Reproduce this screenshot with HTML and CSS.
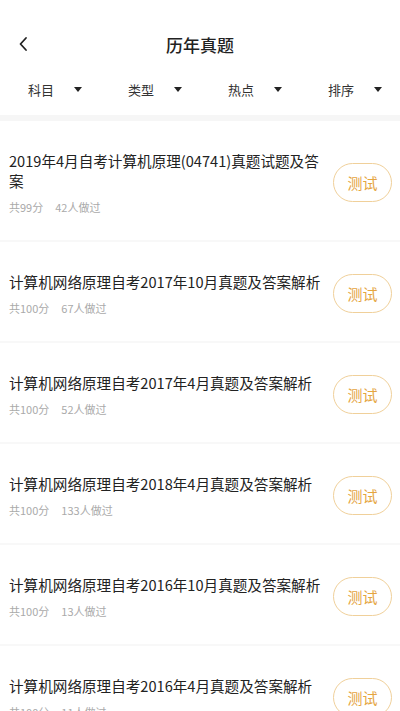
FILE: index.html
```html
<!DOCTYPE html>
<html lang="zh-CN">
<head>
    <meta charset="UTF-8">
    <meta name="viewport" content="width=device-width, initial-scale=1.0">
    <title>历年真题</title>
    <link rel="stylesheet" href="styles.css">
</head>
<body>
    <header class="topbar">
        <span class="back">
            <svg width="10" height="16" viewBox="0 0 10 16"><path d="M8 2 L2.5 8 L8 14" fill="none" stroke="#222" stroke-width="1.8" stroke-linecap="round" stroke-linejoin="round"/></svg>
        </span>
        <h1>历年真题</h1>
    </header>

    <nav class="filters">
        <div class="filter"><span>科目</span><i class="caret"></i></div>
        <div class="filter"><span>类型</span><i class="caret"></i></div>
        <div class="filter"><span>热点</span><i class="caret"></i></div>
        <div class="filter"><span>排序</span><i class="caret"></i></div>
    </nav>

    <ul class="list">
        <li class="item">
            <div class="info">
                <h2>2019年4月自考计算机原理(04741)真题试题及答案</h2>
                <p class="meta"><span>共99分</span><span>42人做过</span></p>
            </div>
            <button class="test">测试</button>
        </li>
        <li class="item">
            <div class="info">
                <h2>计算机网络原理自考2017年10月真题及答案解析</h2>
                <p class="meta"><span>共100分</span><span>67人做过</span></p>
            </div>
            <button class="test">测试</button>
        </li>
        <li class="item">
            <div class="info">
                <h2>计算机网络原理自考2017年4月真题及答案解析</h2>
                <p class="meta"><span>共100分</span><span>52人做过</span></p>
            </div>
            <button class="test">测试</button>
        </li>
        <li class="item">
            <div class="info">
                <h2>计算机网络原理自考2018年4月真题及答案解析</h2>
                <p class="meta"><span>共100分</span><span>133人做过</span></p>
            </div>
            <button class="test">测试</button>
        </li>
        <li class="item">
            <div class="info">
                <h2>计算机网络原理自考2016年10月真题及答案解析</h2>
                <p class="meta"><span>共100分</span><span>13人做过</span></p>
            </div>
            <button class="test">测试</button>
        </li>
        <li class="item">
            <div class="info">
                <h2>计算机网络原理自考2016年4月真题及答案解析</h2>
                <p class="meta"><span>共100分</span><span>11人做过</span></p>
            </div>
            <button class="test">测试</button>
        </li>
    </ul>
</body>
</html>
```

FILE: styles.css
```css
body {
    margin: 0;
    background: #fff;
    color: #333;
    font-family: "Noto Sans CJK SC", sans-serif;
    overflow: hidden;
}
.topbar {
    height: 66px;
    margin-top: 11px;
    display: flex;
    align-items: center;
    justify-content: center;
    position: relative;
}
.topbar h1 {
    margin: 0;
    font-size: 17px;
    font-weight: 500;
    color: #222;
}
.back {
    position: absolute;
    left: 18px;
    top: 50%;
    transform: translateY(-50%);
    display: flex;
}
.filters {
    display: flex;
    height: 24px;
    padding-bottom: 14px;
    border-bottom: 6px solid #f6f6f6;
}
.filter {
    flex: 1;
    display: flex;
    align-items: center;
    padding-left: 28px;
    font-size: 13px;
    color: #333;
}
.filter span {
    width: 46px;
}
.caret {
    width: 0;
    height: 0;
    border-left: 4px solid transparent;
    border-right: 4px solid transparent;
    border-top: 5px solid #222;
}
.list {
    list-style: none;
    margin: 0;
    padding: 0;
}
.item {
    display: flex;
    align-items: center;
    padding: 30px 8px 26px 9px;
    border-bottom: 2px solid #f8f8f8;
}
.info {
    flex: 1;
    padding-right: 3px;
}
.info h2 {
    margin: 0;
    font-size: 14.6px;
    line-height: 20px;
    font-weight: 400;
    color: #222;
}
.meta {
    margin: 9px 0 0;
    font-size: 11px;
    line-height: 14px;
    color: #aaa;
    display: flex;
    gap: 12px;
}
.test {
    width: 59px;
    height: 39px;
    border: 1px solid #f0d09a;
    border-radius: 20px;
    background: #fff;
    color: #e5a53f;
    font-family: "Noto Sans CJK SC", sans-serif;
    font-size: 15px;
    padding: 0;
    flex-shrink: 0;
}
```
